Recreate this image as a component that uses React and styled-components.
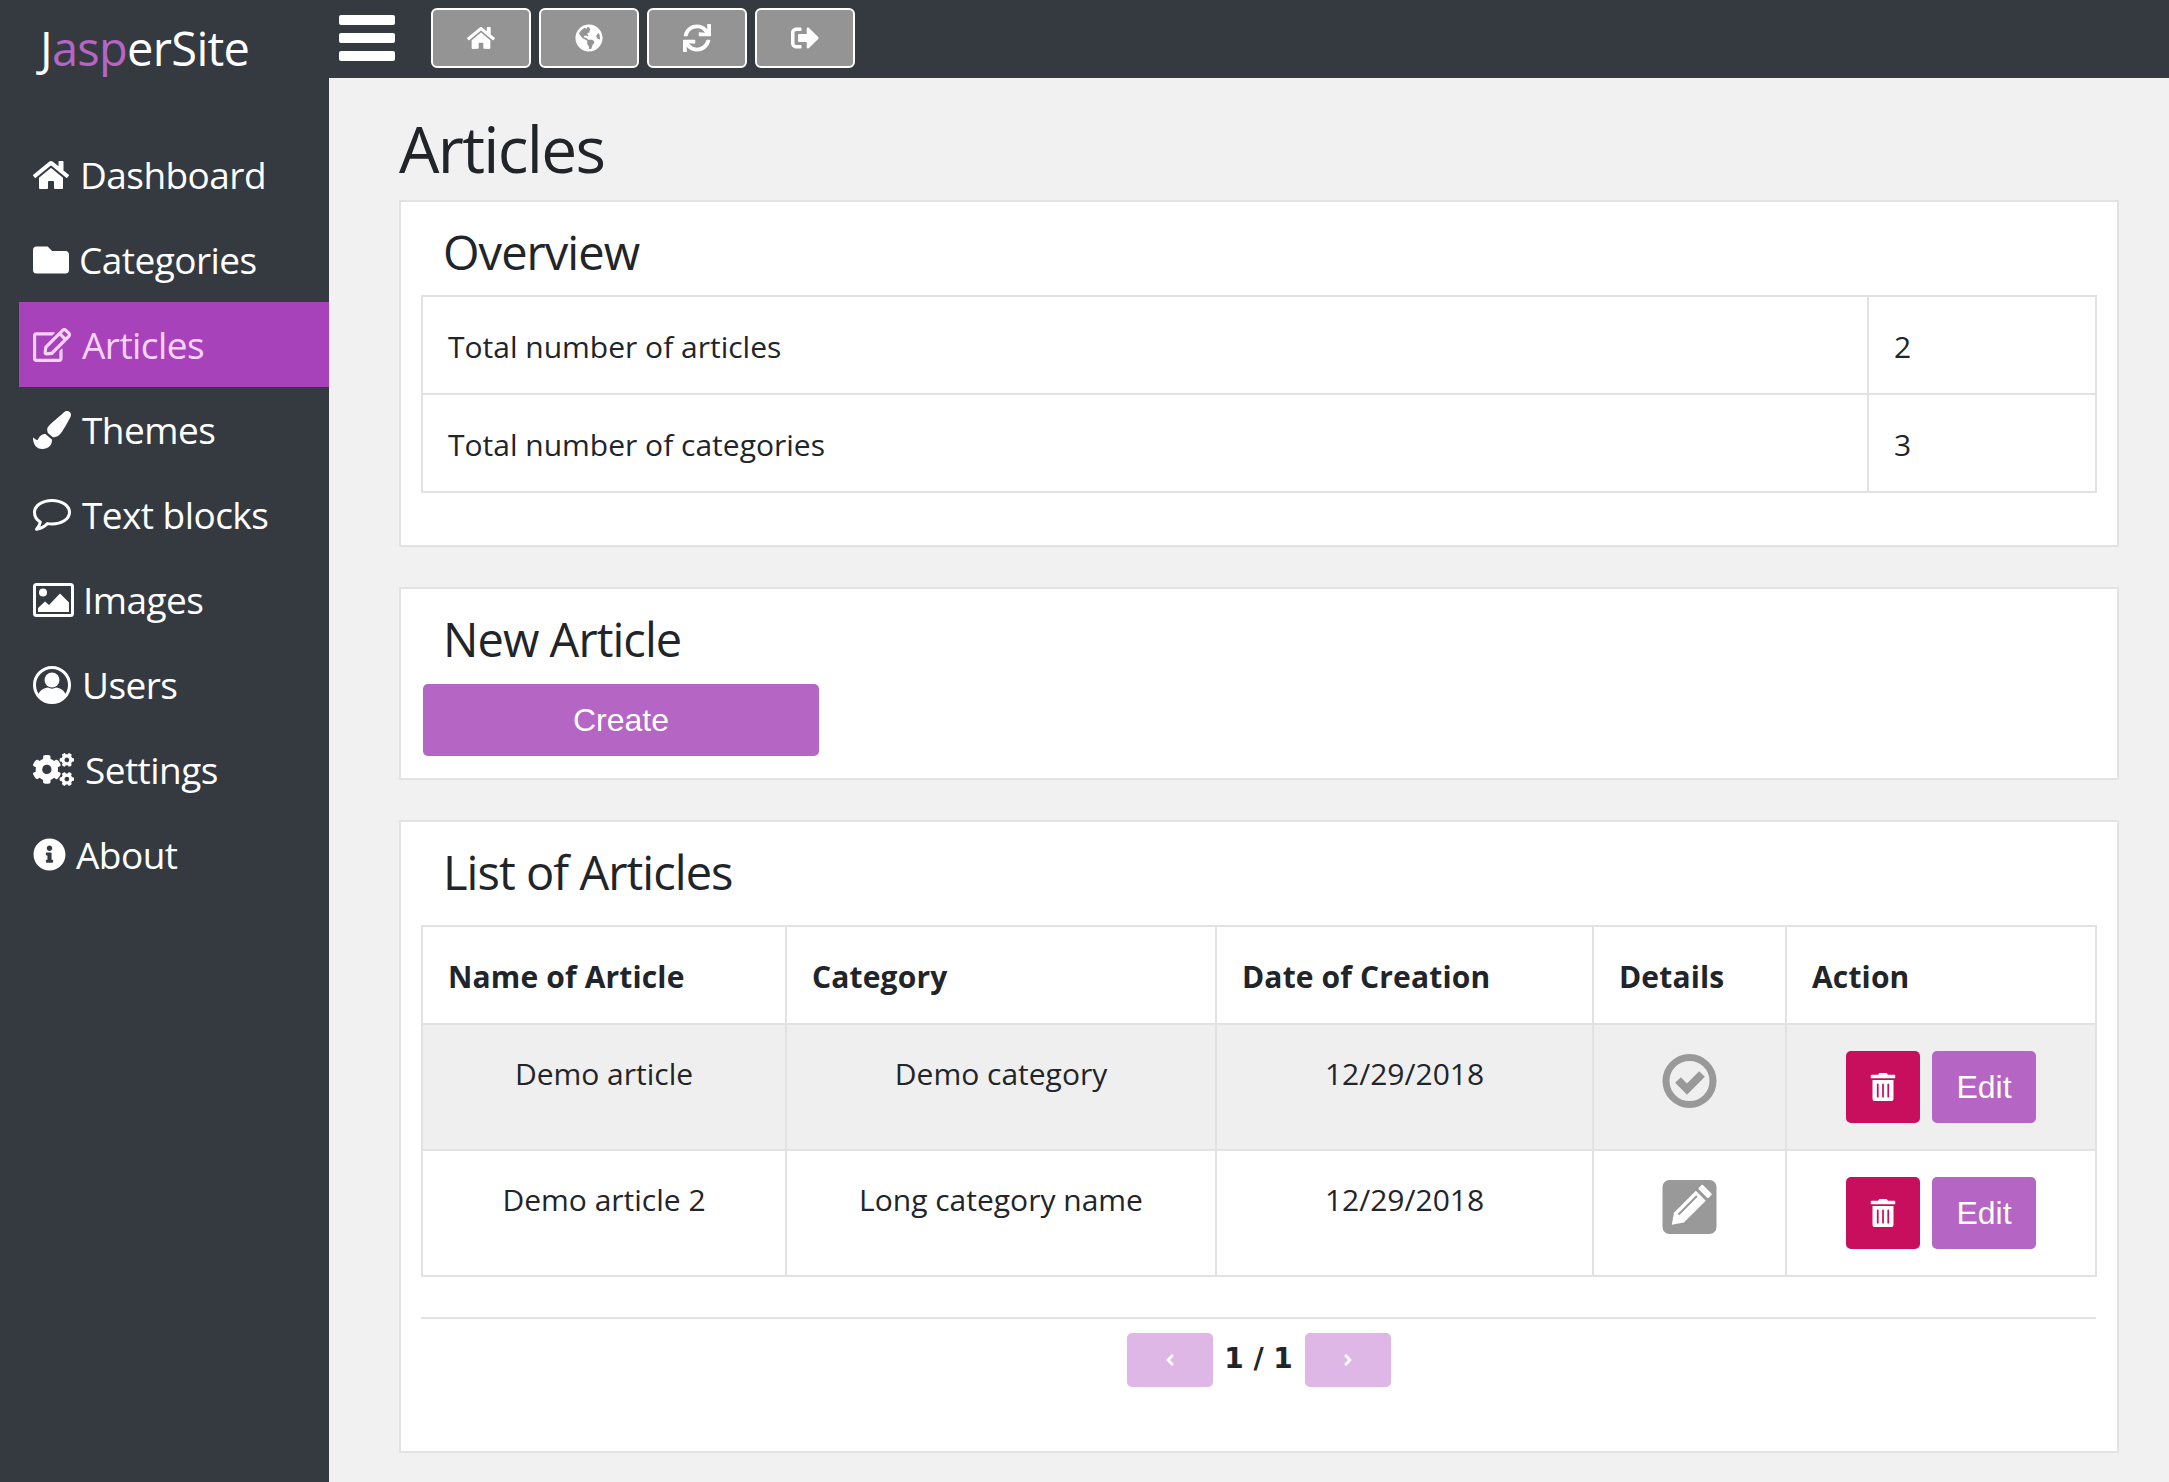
import React from "react";
import styled, { createGlobalStyle } from "styled-components";
import {
  FaHome,
  FaGlobeAmericas,
  FaSync,
  FaSignOutAlt,
  FaFolder,
  FaRegEdit,
  FaPaintBrush,
  FaCogs,
  FaInfoCircle,
  FaTrashAlt,
  FaAngleLeft,
  FaAngleRight,
} from "react-icons/fa";

const GlobalStyle = createGlobalStyle`
  html, body {
    margin: 0;
    padding: 0;
    background: #f1f1f1;
    color: #212529;
    font-family: "Open Sans", "Noto Sans", sans-serif;
  }
  * { box-sizing: border-box; }
`;

const Layout = styled.div`
  display: flex;
  min-height: 1482px;
`;

const Sidebar = styled.aside`
  width: 329px;
  flex-shrink: 0;
  background: #343a40;
`;

const Logo = styled.div`
  height: 132px;
  padding: 17px 0 0 40px;
  font-size: 47px;
  line-height: 62px;
  letter-spacing: -0.7px;
  color: #fff;
  span { color: #b565c3; }
`;

const NavList = styled.nav`
  display: flex;
  flex-direction: column;
  padding-left: 19px;
`;

const NavItem = styled.a`
  height: 85px;
  display: flex;
  align-items: center;
  gap: ${(p) => p.$gap || 11}px;
  padding-left: 14px;
  font-size: 37px;
  letter-spacing: -0.55px;
  color: ${(p) => (p.$active ? "#f8d4fc" : "#fff")};
  background: ${(p) => (p.$active ? "#a742bb" : "transparent")};
  svg {
    flex-shrink: 0;
  }
`;

const Column = styled.div`
  flex: 1;
  min-width: 0;
  display: flex;
  flex-direction: column;
`;

const TopBar = styled.header`
  height: 78px;
  background: #343a40;
  display: flex;
  align-items: center;
  padding: 0 0 2px 10px;
`;

const Burger = styled.div`
  width: 56px;
  height: 46px;
  margin-right: 36px;
  display: flex;
  flex-direction: column;
  justify-content: space-between;
  i {
    display: block;
    height: 10px;
    background: #fff;
    border-radius: 2px;
  }
`;

const ToolButton = styled.button`
  width: 100px;
  height: 60px;
  margin-right: 8px;
  display: flex;
  align-items: center;
  justify-content: center;
  padding: 0;
  background: #949494;
  border: 2px solid #fff;
  border-radius: 6px;
  color: #fff;
`;

const Main = styled.main`
  padding: 33px 50px 30px 70px;
`;

const PageTitle = styled.h1`
  margin: 0 0 13px;
  font-size: 64px;
  font-weight: 400;
  line-height: 76px;
  letter-spacing: -1.7px;
`;

const Card = styled.section`
  background: #fff;
  border: 2px solid #e2e2e2;
  padding: 14px 23px ${(p) => p.$bottom}px 20px;
  margin-bottom: 40px;
  &:last-child { margin-bottom: 0; }
`;

const CardTitle = styled.h3`
  margin: 0 0 ${(p) => p.$gap}px;
  padding-left: 22px;
  font-size: 47px;
  font-weight: 400;
  line-height: 72px;
  letter-spacing: -0.95px;
`;

const Table = styled.table`
  width: 100%;
  table-layout: fixed;
  border-collapse: collapse;
  font-size: 30px;
`;

const Col = styled.col`
  width: ${(p) => p.$w}px;
`;

const HeadCell = styled.th`
  border: 2px solid #e2e2e2;
  height: 98px;
  padding: 2px 25px 0;
  text-align: left;
  font-weight: 700;
  letter-spacing: 0.15px;
`;

const Cell = styled.td`
  border: 2px solid #e2e2e2;
  height: ${(p) => p.$h || 126}px;
  padding: ${(p) => (p.$plain ? "2px 25px 0" : "26px 25px")};
  text-align: ${(p) => (p.$plain ? "left" : "center")};
  vertical-align: ${(p) => (p.$plain ? "middle" : "top")};
  line-height: 1.5;
`;

const Row = styled.tr`
  background: ${(p) => (p.$striped ? "#efefef" : "#fff")};
`;

const DetailIcon = styled.div`
  display: flex;
  justify-content: center;
  margin-top: 3px;
  color: #999;
`;

const Actions = styled.div`
  display: flex;
  justify-content: center;
  gap: 12px;
`;

const BaseButton = styled.button`
  height: 72px;
  border: none;
  border-radius: 5px;
  color: #fff;
  font-family: "Liberation Sans", Arial, sans-serif;
  font-size: 32px;
  display: flex;
  align-items: center;
  justify-content: center;
  padding: 0;
`;

const CreateButton = styled(BaseButton)`
  width: 396px;
  margin-left: 2px;
  background: #b565c3;
`;

const DeleteButton = styled(BaseButton)`
  width: 74px;
  background: #c70f5d;
`;

const EditButton = styled(BaseButton)`
  width: 104px;
  background: #b565c3;
`;

const Pager = styled.div`
  margin: 40px -2px 0 0;
  border-top: 2px solid #e2e2e2;
  padding-top: 14px;
  display: flex;
  justify-content: center;
  align-items: center;
  gap: 11px;
`;

const PageButton = styled(BaseButton)`
  width: 86px;
  height: 54px;
  background: #dfb7e6;
`;

const PageLabel = styled.b`
  font-family: "DejaVu Sans", sans-serif;
  font-size: 28px;
  white-space: nowrap;
  width: 70px;
  margin-bottom: 3px;
  text-align: center;
`;

function CheckCircle() {
  return (
    <svg width="55" height="54" viewBox="0 0 55 54">
      <circle cx="27.5" cy="27" r="23.5" fill="none" stroke="currentColor" strokeWidth="7" />
      <polyline points="16,26 25,35 40,20" fill="none" stroke="currentColor" strokeWidth="8" />
    </svg>
  );
}

function PencilSquare() {
  return (
    <svg width="55" height="54" viewBox="0 0 54 54">
      <rect width="54" height="54" rx="7" fill="currentColor" />
      <g transform="rotate(45 27 27)" fill="#fff">
        <rect x="20" y="2" width="14" height="6" rx="1" />
        <path d="M20 11h14v31l-7 10-7-10z" />
        <rect x="23.5" y="14" width="2" height="26" fill="#999" />
      </g>
    </svg>
  );
}

function CommentOutline() {
  return (
    <svg width="38" height="32" viewBox="0 0 38 32">
      <path
        d="M19 1.5c9.2 0 17.500 4.800 17.500 11.800S28.200 25 19 25c-1.600 0-3.100-.1-4.600-.4C11.500 27.500 8 29.500 3.500 30.300c1.800-1.900 3.300-4 3.800-7.200C3.700 21 1.500 17.400 1.500 13.300 1.500 6.300 9.800 1.500 19 1.500z"
        fill="none"
        stroke="currentColor"
        strokeWidth="3"
        strokeLinejoin="round"
      />
    </svg>
  );
}

function UserCircle() {
  return (
    <svg width="38" height="38" viewBox="0 0 38 38">
      <circle cx="19" cy="19" r="17.500" fill="none" stroke="currentColor" strokeWidth="3" />
      <circle cx="19" cy="14" r="7.500" fill="currentColor" />
      <path
        d="M5 29c2-5 6-7 10-7.500 2.500 1.500 5.500 1.500 8 0 4 .5 8 2.500 10 7.500-3 4.500-8.500 8-14 8s-11-3.500-14-8z"
        fill="currentColor"
      />
    </svg>
  );
}

function Picture() {
  return (
    <svg width="41" height="34" viewBox="0 0 41 34">
      <rect x="1.500" y="1.500" width="38" height="31" rx="2" fill="none" stroke="currentColor" strokeWidth="3" />
      <circle cx="10" cy="9.500" r="4" fill="currentColor" />
      <path d="M5 29v-4l7-6.500 4 3.500 11-11.500 9 9V29z" fill="currentColor" />
    </svg>
  );
}

const navItems = [
  { label: "Dashboard", icon: <FaHome size={36} />, gap: 11 },
  { label: "Categories", icon: <FaFolder size={36} />, gap: 10 },
  { label: "Articles", icon: <FaRegEdit size={38} />, active: true, gap: 11 },
  { label: "Themes", icon: <FaPaintBrush size={38} />, gap: 11 },
  { label: "Text blocks", icon: <CommentOutline />, gap: 11 },
  { label: "Images", icon: <Picture />, gap: 9 },
  { label: "Users", icon: <UserCircle />, gap: 11 },
  { label: "Settings", icon: <FaCogs size={41} />, gap: 11 },
  { label: "About", icon: <FaInfoCircle size={33} />, gap: 10 },
];

const articles = [
  { name: "Demo article", category: "Demo category", date: "12/29/2018", published: true },
  { name: "Demo article 2", category: "Long category name", date: "12/29/2018", published: false },
];

export default function App() {
  return (
    <Layout>
      <GlobalStyle />
      <Sidebar>
        <Logo>
          J<span>asp</span>erSite
        </Logo>
        <NavList>
          {navItems.map((item) => (
            <NavItem key={item.label} $active={item.active} $gap={item.gap}>
              {item.icon}
              {item.label}
            </NavItem>
          ))}
        </NavList>
      </Sidebar>
      <Column>
        <TopBar>
          <Burger>
            <i />
            <i />
            <i />
          </Burger>
          <ToolButton><FaHome size={28} /></ToolButton>
          <ToolButton><FaGlobeAmericas size={28} /></ToolButton>
          <ToolButton><FaSync size={28} /></ToolButton>
          <ToolButton><FaSignOutAlt size={28} /></ToolButton>
        </TopBar>
        <Main>
          <PageTitle>Articles</PageTitle>

          <Card $bottom={52}>
            <CardTitle $gap={7}>Overview</CardTitle>
            <Table>
              <colgroup>
                <Col $w={1446} />
                <Col $w={228} />
              </colgroup>
              <tbody>
                <Row>
                  <Cell $plain $h={98}>Total number of articles</Cell>
                  <Cell $plain $h={98}>2</Cell>
                </Row>
                <Row>
                  <Cell $plain $h={98}>Total number of categories</Cell>
                  <Cell $plain $h={98}>3</Cell>
                </Row>
              </tbody>
            </Table>
          </Card>

          <Card $bottom={22}>
            <CardTitle $gap={9}>New Article</CardTitle>
            <CreateButton>Create</CreateButton>
          </Card>

          <Card $bottom={64}>
            <CardTitle $gap={17}>List of Articles</CardTitle>
            <Table>
              <colgroup>
                <Col $w={364} />
                <Col $w={430} />
                <Col $w={377} />
                <Col $w={193} />
                <Col $w={310} />
              </colgroup>
              <thead>
                <tr>
                  <HeadCell>Name of Article</HeadCell>
                  <HeadCell>Category</HeadCell>
                  <HeadCell>Date of Creation</HeadCell>
                  <HeadCell>Details</HeadCell>
                  <HeadCell>Action</HeadCell>
                </tr>
              </thead>
              <tbody>
                {articles.map((a, i) => (
                  <Row key={a.name} $striped={i === 0}>
                    <Cell>{a.name}</Cell>
                    <Cell>{a.category}</Cell>
                    <Cell>{a.date}</Cell>
                    <Cell>
                      <DetailIcon>
                        {a.published ? <CheckCircle /> : <PencilSquare />}
                      </DetailIcon>
                    </Cell>
                    <Cell>
                      <Actions>
                        <DeleteButton><FaTrashAlt size={28} /></DeleteButton>
                        <EditButton>Edit</EditButton>
                      </Actions>
                    </Cell>
                  </Row>
                ))}
              </tbody>
            </Table>
            <Pager>
              <PageButton><FaAngleLeft size={18} /></PageButton>
              <PageLabel>1 / 1</PageLabel>
              <PageButton><FaAngleRight size={18} /></PageButton>
            </Pager>
          </Card>
        </Main>
      </Column>
    </Layout>
  );
}
